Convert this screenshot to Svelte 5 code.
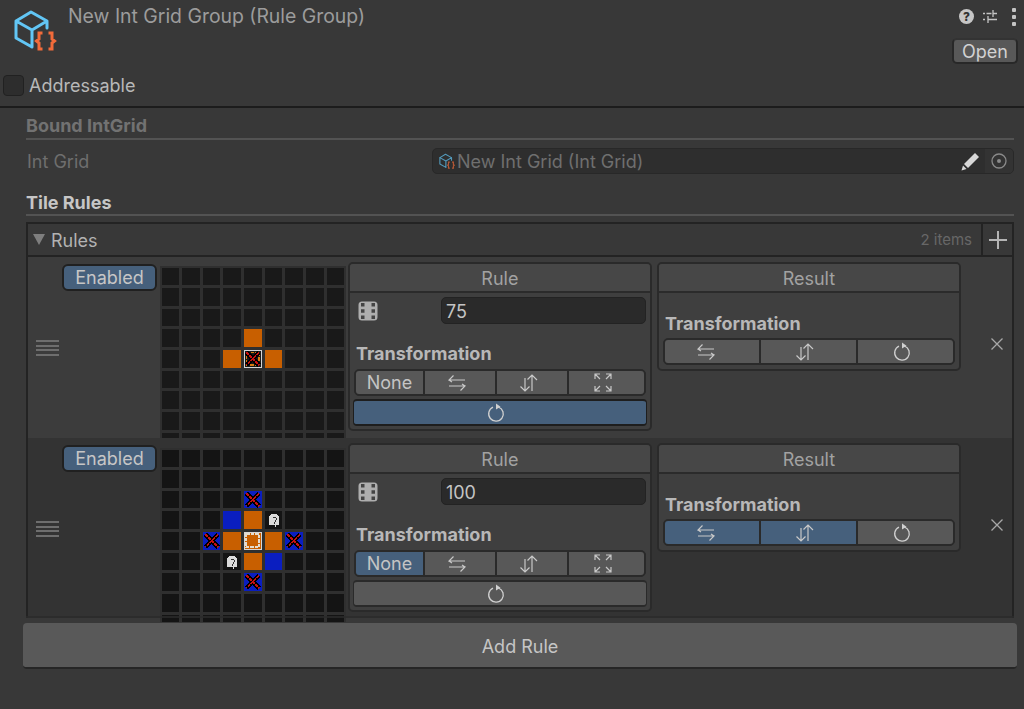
<script>
  // 9x9 pattern grid, each entry is [row, col, kind]
  const rules = [
    {
      chance: 75,
      rule: { none: false, h: false, v: false, both: false, rot: true },
      result: { h: false, v: false, rot: false },
      cells: [
        [3, 4, 'orange'],
        [4, 3, 'orange'],
        [4, 5, 'orange'],
        [4, 4, 'center-x'],
      ],
    },
    {
      chance: 100,
      rule: { none: true, h: false, v: false, both: false, rot: false },
      result: { h: true, v: true, rot: false },
      cells: [
        [2, 4, 'blue-x'],
        [3, 3, 'blue'],
        [3, 4, 'orange'],
        [3, 5, 'tile'],
        [4, 2, 'blue-x'],
        [4, 3, 'orange'],
        [4, 4, 'center'],
        [4, 5, 'orange'],
        [4, 6, 'blue-x'],
        [5, 3, 'tile'],
        [5, 4, 'orange'],
        [5, 5, 'blue'],
        [6, 4, 'blue-x'],
      ],
    },
  ];

  function buildGrid(cells) {
    const out = [];
    for (let r = 0; r < 9; r++) {
      for (let c = 0; c < 9; c++) {
        const hit = cells.find((x) => x[0] === r && x[1] === c);
        out.push(hit ? hit[2] : 'empty');
      }
    }
    return out;
  }
</script>

{#snippet logo(size)}
  <svg width={size} height={size} viewBox="0 0 48 48" fill="none">
    <path d="M5 15 20 6l16 9v7M5 15v17l16 9M5 15l16 9v17M21 24l15-9" stroke="#62c6f5" stroke-width="3" stroke-linejoin="round" stroke-linecap="round" />
    <path d="M30 27h-2v6l-2.500 2 2.500 2v6h2M39 27h2v6l2.500 2-2.500 2v6h-2" stroke="#f26b3a" stroke-width="3" stroke-linecap="square" />
  </svg>
{/snippet}

{#snippet flipH()}
  <svg width="18" height="18" viewBox="0 0 18 18" fill="none" stroke="#c8c8c8" stroke-width="1.200">
    <path d="M5.500 1.500 1 6h16M1 6l3 2" />
    <path d="M1 12h16l-4.500 4.500M17 12l-3-2" />
  </svg>
{/snippet}

{#snippet flipV()}
  <svg width="20" height="18" viewBox="0 0 20 18" fill="none" stroke="#c8c8c8" stroke-width="1.200">
    <path d="M6 4v13M1.500 12.500 6 17l4.500-4.500" />
    <path d="M13 17V1M8.500 5.500 13 1l5 5" />
  </svg>
{/snippet}

{#snippet expand()}
  <svg width="18" height="19" viewBox="0 0 18 19" fill="none" stroke="#c8c8c8" stroke-width="1.200">
    <path d="M1 6V1h5M1 1l5 5M17 6V1h-5M17 1l-5 5M1 13v5h5M1 18l5-5M17 13v5h-5M17 18l-5-5" />
  </svg>
{/snippet}

{#snippet rotate()}
  <svg width="18" height="19" viewBox="0 0 18 19" fill="none">
    <path d="M6 4.200a7.300 7.300 0 1 0 5.500-.2" stroke="#d0d0d0" stroke-width="1.300" />
    <path d="M9 0.500 13.500 3.800 9 6.500z" fill="#d0d0d0" />
  </svg>
{/snippet}

{#snippet dice()}
  <svg width="20" height="20" viewBox="0 0 20 20">
    <rect x="0.500" y="0.500" width="19" height="19" rx="3.500" fill="#aeaeae" />
    <path d="M3 2h3.500v3.500H3zM3 8.200h3.500v3.500H3zM3 14.500h3.500V18H3zM13.500 2H17v3.500h-3.500zM13.500 8.200H17v3.500h-3.500zM13.500 14.500H17V18h-3.500z" fill="#444" />
  </svg>
{/snippet}

{#snippet crossMark()}
  <svg class="mark" viewBox="0 0 18 18" shape-rendering="crispEdges">
    <path d="M2.500 2.500 15.500 15.500M15.500 2.500 2.500 15.500" stroke="#000" stroke-width="4.500" />
    <path d="M2.500 2.500 15.500 15.500M15.500 2.500 2.500 15.500" stroke="#c81010" stroke-width="1.500" stroke-dasharray="3.500 0.800" />
  </svg>
{/snippet}

{#snippet centerFrame(dash, width)}
  <svg class="mark" viewBox="0 0 18 18" shape-rendering="crispEdges" fill="none">
    <rect x="0.500" y="0.500" width="17" height="17" stroke="#d8d8d8" />
    <rect x="2.500" y="2.500" width="13" height="13" stroke={dash} stroke-width={width} stroke-dasharray="3.500 1" />
  </svg>
{/snippet}

{#snippet tileMark()}
  <svg class="mark" viewBox="0 0 18 18" shape-rendering="crispEdges">
    <path d="M6 3h5l3 2v9h-3v2h-1v-2H4V5l2-1z" fill="#dcdcdc" />
    <path d="M8 6h3v1H8zM11 7h1v2h-1zM10 9h1v2h-1zM9 11h1v2H9z" fill="#333" />
  </svg>
{/snippet}

<div class="inspector">
  <header class="head">
    <div class="head-top">
      <div class="logo">{@render logo(48)}</div>
      <div class="title">New Int Grid Group (Rule Group)</div>
      <div class="head-side">
        <div class="head-icons">
          <span class="help">?</span>
          <svg width="16" height="15" viewBox="0 0 16 15" fill="none" stroke="#c4c4c4" stroke-width="1.300">
            <path d="M1 4.500h2M4.500 4.500h5M11 1v7M11 4.500h4M1 10.500h2M6 7v7M6 10.500h9" />
          </svg>
          <span class="kebab"><i></i><i></i><i></i></span>
        </div>
        <button class="open">Open</button>
      </div>
    </div>
    <label class="addr">
      <span class="check"></span>
      <span>Addressable</span>
    </label>
  </header>

  <section class="body">
    <div class="sec-title dim">Bound IntGrid</div>
    <div class="field-row">
      <span class="field-label">Int Grid</span>
      <div class="field">
        <span class="field-icon">{@render logo(18)}</span>
        <span class="field-text">New Int Grid (Int Grid)</span>
        <svg class="pencil" width="22" height="21" viewBox="0 0 22 21">
          <path d="M5 13 16 2l4 4L9 17z" fill="#d8d8d8" />
          <path d="M4 14.500 7.500 18 2.500 19.500z" fill="#d8d8d8" />
        </svg>
        <span class="picker">
          <svg width="16" height="16" viewBox="0 0 16 16" fill="none">
            <circle cx="8" cy="8" r="7" stroke="#8a8a8a" stroke-width="1.300" />
            <circle cx="8" cy="8" r="2" fill="#8a8a8a" />
          </svg>
        </span>
      </div>
    </div>

    <div class="sec-title bright">Tile Rules</div>

    <div class="list">
      <div class="list-head">
        <span class="fold"></span>
        <span class="list-name">Rules</span>
        <span class="count">2 items</span>
        <span class="add">
          <svg width="20" height="20" viewBox="0 0 20 20" fill="none" stroke="#b4b4b4" stroke-width="2">
            <path d="M10 1v18M1 10h18" />
          </svg>
        </span>
      </div>

      {#each rules as r, i}
        <div class="row" class:alt={i === 1}>
          <div class="handle"><i></i><i></i><i></i><i></i></div>
          <button class="enabled">Enabled</button>
          <div class="grid">
            {#each buildGrid(r.cells) as kind}
              <div class="cell {kind}">
                {#if kind === 'center-x'}
                  {@render centerFrame('#d87a10', 1.5)}
                  {@render crossMark()}
                {:else if kind === 'center'}
                  {@render centerFrame('#e4dccf', 2)}
                {:else if kind === 'blue-x'}
                  {@render crossMark()}
                {:else if kind === 'tile'}
                  {@render tileMark()}
                {/if}
              </div>
            {/each}
          </div>

          <div class="panel rule-panel">
            <div class="panel-head">Rule</div>
            <div class="chance">
              {@render dice()}
              <div class="num">{r.chance}</div>
            </div>
            <div class="trans-label">Transformation</div>
            <div class="group four">
              <button class:on={r.rule.none}>None</button>
              <button class:on={r.rule.h}>{@render flipH()}</button>
              <button class:on={r.rule.v}>{@render flipV()}</button>
              <button class:on={r.rule.both}>{@render expand()}</button>
            </div>
            <button class="rot-wide" class:on={r.rule.rot}>{@render rotate()}</button>
          </div>

          <div class="panel result-panel">
            <div class="panel-head">Result</div>
            <div class="trans-label">Transformation</div>
            <div class="group three">
              <button class:on={r.result.h}>{@render flipH()}</button>
              <button class:on={r.result.v}>{@render flipV()}</button>
              <button class:on={r.result.rot}>{@render rotate()}</button>
            </div>
          </div>

          <svg class="close" width="14" height="14" viewBox="0 0 14 14" stroke="#a8a8a8" stroke-width="1.300">
            <path d="M1.500 1.500 12.500 12.500M12.500 1.500 1.500 12.500" />
          </svg>
        </div>
      {/each}
    </div>

    <button class="add-rule">Add Rule</button>
  </section>
</div>

<style>
  :global(body) {
    background: #383838;
  }

  .inspector {
    width: 1024px;
    height: 709px;
    overflow: hidden;
    background: #383838;
    font-family: Inter, "Liberation Sans", sans-serif;
    font-size: 18px;
    color: #b4b4b4;
  }

  button {
    font: inherit;
    color: inherit;
    padding: 0;
    cursor: pointer;
  }

  /* header */
  .head {
    height: 106px;
    border-bottom: 2px solid #1c1c1c;
    box-sizing: content-box;
  }

  .head-top {
    display: flex;
    height: 74px;
  }

  .logo {
    width: 48px;
    height: 48px;
    margin: 6px 0 0 11px;
  }

  .title {
    margin: 6px 0 0 9px;
    color: #9c9c9c;
    font-size: 19.400px;
    line-height: 21px;
    flex: 1;
  }

  .head-side {
    display: flex;
    flex-direction: column;
    align-items: flex-end;
    padding: 9px 6px 0 0;
    gap: 14px;
  }

  .head-icons {
    display: flex;
    align-items: center;
    gap: 8px;
    height: 15px;
    padding-right: 2px;
  }

  .help {
    width: 15px;
    height: 15px;
    border-radius: 50%;
    background: #c6c6c6;
    color: #333;
    font-size: 12px;
    font-weight: 800;
    line-height: 15px;
    text-align: center;
  }

  .kebab {
    display: flex;
    flex-direction: column;
    gap: 3px;
    margin-left: 6px;
  }

  .kebab i {
    display: block;
    width: 4px;
    height: 4px;
    border-radius: 1px;
    background: #c4c4c4;
  }

  .open {
    width: 66px;
    height: 26px;
    line-height: 21px;
    background: #585858;
    border: 2px solid #282828;
    border-top-color: #333;
    border-radius: 5px;
    color: #d2d2d2;
    text-align: right;
    padding-right: 8px;
  }

  .addr {
    display: flex;
    align-items: center;
    gap: 5px;
    margin-left: 3px;
    height: 22px;
    color: #b8b8b8;
  }

  .check {
    width: 21px;
    height: 21px;
    box-sizing: border-box;
    background: #2d2d2d;
    border: 1px solid #212121;
    border-radius: 4px;
  }

  /* body */
  .body {
    padding: 0 10px 0 26px;
    position: relative;
  }

  .sec-title {
    font-weight: 700;
    border-bottom: 2px solid #535353;
    height: 30px;
    line-height: 35px;
    box-sizing: content-box;
  }

  .sec-title.dim {
    color: #727272;
  }

  .sec-title.bright {
    color: #c6c6c6;
    height: 25px;
    line-height: 27px;
    margin-top: 15px;
  }

  .field-row {
    display: flex;
    align-items: center;
    height: 26px;
    margin-top: 8px;
  }

  .field-label {
    width: 405px;
    padding-left: 1px;
    color: #6e6e6e;
  }

  .field {
    flex: 1;
    height: 26px;
    display: flex;
    align-items: center;
    box-sizing: border-box;
    background: #2e2e2e;
    border: 1px solid #282828;
    border-radius: 5px;
    color: #6f6f6f;
    padding-left: 5px;
  }

  .field-icon {
    width: 19px;
    height: 18px;
    opacity: 0.7;
  }

  .field-text {
    flex: 1;
  }

  .pencil {
    margin-right: 4px;
  }

  .picker {
    width: 28px;
    height: 24px;
    background: #333;
    border-radius: 0 4px 4px 0;
    display: flex;
    align-items: center;
    justify-content: center;
  }

  /* reorderable list */
  .list {
    position: relative;
    margin-top: 6px;
    border: 2px solid #232323;
    border-bottom: 0;
    height: 396px;
    box-sizing: border-box;
  }

  .list::after {
    content: "";
    position: absolute;
    left: -2px;
    right: -2px;
    bottom: 0;
    height: 2px;
    background: #2a2a2a;
    opacity: 0.8;
  }

  .list-head {
    display: flex;
    align-items: center;
    height: 31px;
    border-bottom: 2px solid #232323;
    box-sizing: content-box;
    padding-left: 5px;
    color: #b2b2b2;
  }

  .fold {
    width: 0;
    height: 0;
    border-left: 6.500px solid transparent;
    border-right: 6.500px solid transparent;
    border-top: 11px solid #7e7e7e;
    margin-right: 6px;
  }

  .list-name {
    flex: 1;
    padding-top: 2px;
  }

  .count {
    color: #676767;
    font-size: 15px;
    margin-right: 9px;
  }

  .add {
    width: 31px;
    height: 31px;
    border-left: 2px solid #232323;
    display: flex;
    align-items: center;
    justify-content: center;
    box-sizing: border-box;
  }

  .row {
    display: flex;
    align-items: flex-start;
    height: 181px;
    background: #3c3c3c;
    padding-top: 5px;
    box-sizing: border-box;
  }

  .row.alt {
    background: #333;
    height: 180px;
  }

  .handle {
    width: 23px;
    margin: 78px 0 0 8px;
    display: flex;
    flex-direction: column;
    gap: 2.600px;
  }

  .handle i {
    display: block;
    height: 2px;
    background: #6e6e6e;
  }

  .enabled {
    width: 95px;
    height: 27px;
    margin: 2px 0 0 3px;
    background: #46607c;
    border: 2px solid #202020;
    border-radius: 6px;
    color: #c6c6c6;
    line-height: 21px;
  }

  .grid {
    display: grid;
    grid-template-columns: repeat(9, 17.670px);
    grid-auto-rows: 17.670px;
    gap: 3px;
    padding: 1.500px;
    margin: 4px 2px 0 3px;
    background: #2f2f2f;
    height: 172px;
    box-sizing: border-box;
    overflow: hidden;
    flex-shrink: 0;
  }

  .row.alt .grid {
    height: 174px;
    margin-top: 5px;
    position: relative;
  }

  .cell {
    position: relative;
    background: #191919;
  }

  .alt .cell {
    background: #141414;
  }

  .cell.orange,
  .cell.center,
  .alt .cell.orange,
  .alt .cell.center {
    background: #c85f00;
  }

  .cell.blue,
  .alt .cell.blue,
  .alt .cell.blue-x {
    background: #0a1ec0;
  }

  .mark {
    position: absolute;
    inset: 0;
    width: 100%;
    height: 100%;
  }

  /* panels */
  .panel {
    background: #3f3f3f;
    border: 2px solid #2a2a2a;
    border-radius: 5px;
    box-sizing: border-box;
    width: 304px;
    overflow: hidden;
    flex-shrink: 0;
  }

  .rule-panel {
    height: 169px;
  }

  .result-panel {
    height: 109px;
    margin-left: 5px;
  }

  .panel-head {
    height: 27px;
    line-height: 29px;
    background: #474747;
    border-bottom: 2px solid #2b2b2b;
    text-align: center;
    color: #a2a2a2;
    box-sizing: content-box;
  }

  .chance {
    display: flex;
    align-items: center;
    height: 27px;
    margin: 4px 4px 0 8px;
  }

  .num {
    width: 205px;
    height: 27px;
    margin-left: auto;
    box-sizing: border-box;
    background: #2a2a2a;
    border: 1px solid #232323;
    border-radius: 5px;
    padding-left: 4px;
    line-height: 27px;
    color: #c4c4c4;
  }

  .trans-label {
    font-weight: 700;
    color: #b8b8b8;
    line-height: 21px;
    margin: 19px 0 0 6px;
  }

  .result-panel .trans-label {
    margin-top: 20px;
  }

  .group {
    display: grid;
    height: 27px;
    box-sizing: border-box;
    margin: 5px 0 0 4px;
    background: #2a2a2a;
    border: 1px solid #2a2a2a;
    border-radius: 5px;
    padding: 1px;
    gap: 2px;
    overflow: hidden;
  }

  .group.four {
    width: 292px;
    grid-template-columns: 67px 70px 70px 1fr;
  }

  .group.three {
    width: 292px;
    margin-left: 4px;
    margin-top: 4px;
    grid-template-columns: 94px 95px 1fr;
  }

  .group button {
    background: #585858;
    border: 0;
    color: #c4c4c4;
    display: flex;
    align-items: center;
    justify-content: center;
    line-height: 21px;
  }

  .group button :global(svg) {
    margin-right: 6px;
  }

  .group.three button:first-child :global(svg) {
    margin-right: 12px;
  }

  .group button:first-child {
    border-radius: 3px 0 0 3px;
  }

  .group button:last-child {
    border-radius: 0 3px 3px 0;
  }

  .group button.on {
    background: #46607c;
  }

  .rot-wide {
    display: flex;
    align-items: center;
    justify-content: center;
    width: 294px;
    height: 27px;
    margin: 3px 0 0 3px;
    box-sizing: border-box;
    background: #585858;
    border: 1px solid #2a2a2a;
    border-top-width: 2px;
    border-bottom-width: 2px;
    border-radius: 4px;
  }

  .rot-wide :global(svg) {
    margin-right: 8px;
  }

  .rot-wide.on {
    background: #46607c;
    border-color: #1e1e1e;
  }

  .close {
    margin: 75px 0 0 29px;
  }

  /* add button */
  .add-rule {
    position: relative;
    display: block;
    width: 994px;
    height: 46px;
    margin: 5px 0 0 -3px;
    padding-top: 2px;
    background: #595959;
    border: 0;
    border-bottom: 2px solid #262626;
    border-radius: 4px;
    color: #c6c6c6;
    box-sizing: border-box;
  }
</style>
